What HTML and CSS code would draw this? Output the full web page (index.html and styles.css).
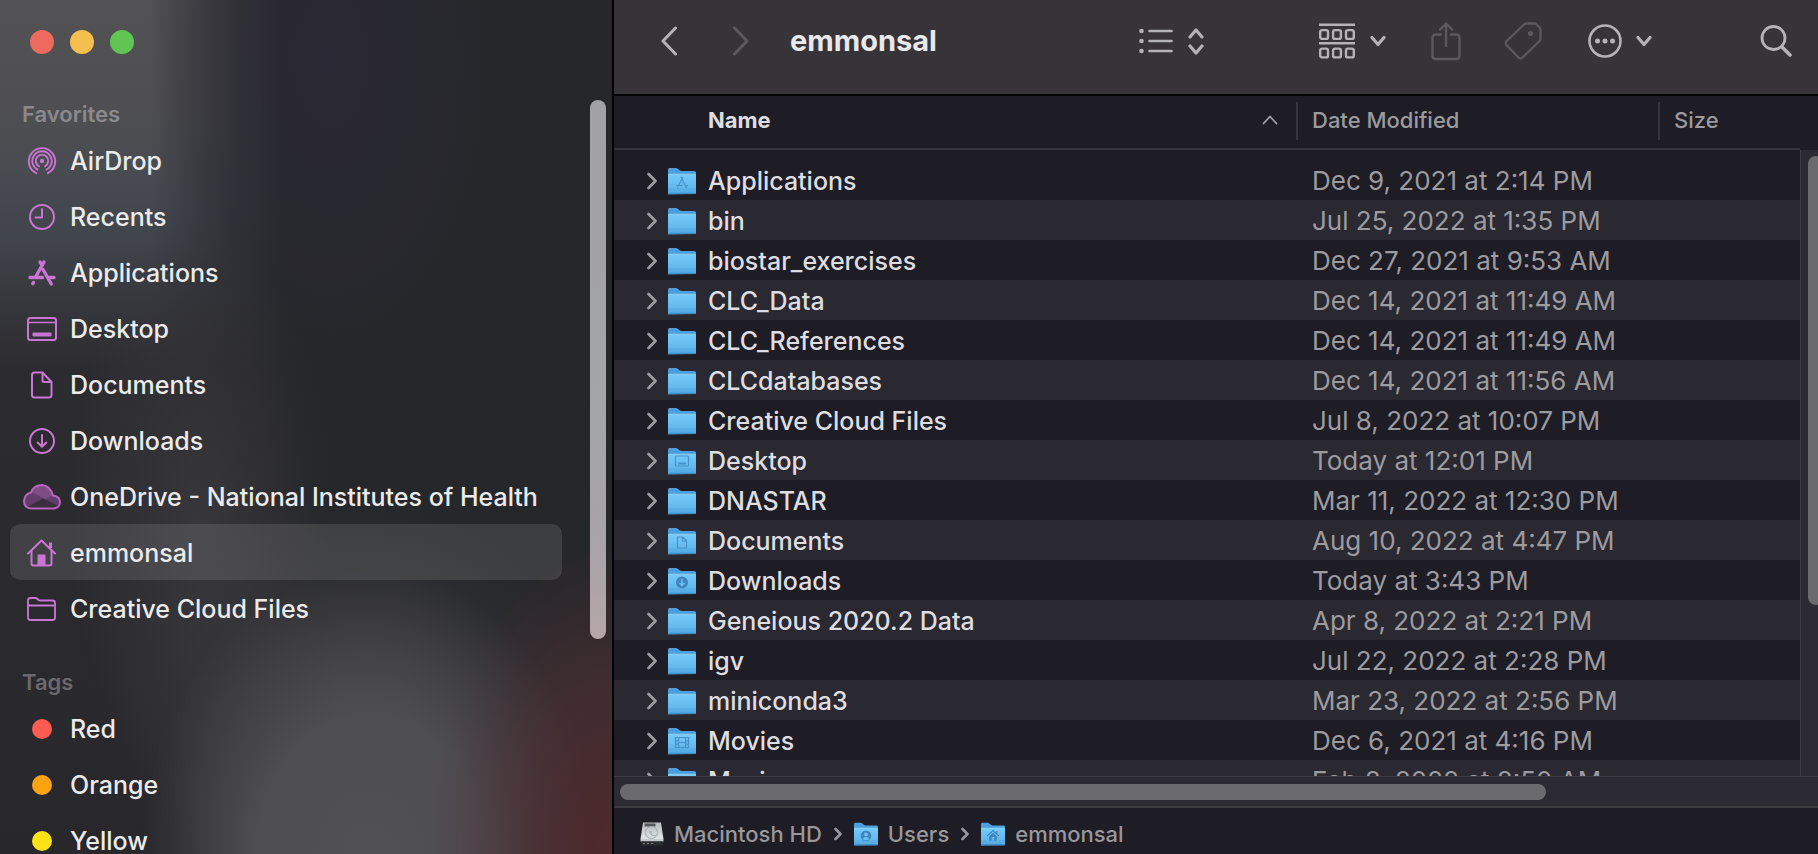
FILE: index.html
```html
<!DOCTYPE html>
<html lang="en">
<head>
<meta charset="utf-8">
<title>emmonsal</title>
<link rel="stylesheet" href="styles.css">
</head>
<body>
<svg class="defs" aria-hidden="true">
  <defs>
    <linearGradient id="folder-front" x1="0" y1="0" x2="0" y2="1">
      <stop offset="0" stop-color="#7fd0fb"/>
      <stop offset="0.2" stop-color="#70c6f7"/>
      <stop offset="1" stop-color="#5ab0e6"/>
    </linearGradient>
    <linearGradient id="drive-face" x1="0" y1="0" x2="0" y2="1">
      <stop offset="0" stop-color="#b9bcbf"/>
      <stop offset="1" stop-color="#dde3e6"/>
    </linearGradient>
    <symbol id="folder" viewBox="0 0 28 28">
      <path d="M0 27.500V2.500Q0 1 1.500 1H8Q9 1 10 2L11.500 3.200Q12.500 4 14 4H26.500Q28 4 28 5.500V27Z" fill="#4c9fdc"/>
      <path d="M0 6H28V7H0Z" fill="#3a82c4"/>
      <path d="M0 7.500Q0 6.500 1 6.500H27Q28 6.500 28 7.500V25.500Q28 27 26.500 27H1.500Q0 27 0 25.500Z" fill="url(#folder-front)"/>
      <path d="M0 22H28M0 24H28" stroke="#4da3dc" stroke-width="0.700"/>
      <path d="M0.300 26.300H27.700" stroke="#3b8cc6" stroke-width="1.200"/>
    </symbol>
    <symbol id="disclosure" viewBox="0 0 12 18">
      <path d="M2.500 2L9.500 9L2.500 16" fill="none" stroke="currentColor" stroke-width="2.800" stroke-linecap="round" stroke-linejoin="round"/>
    </symbol>
    <symbol id="caret" viewBox="0 0 16 12">
      <path d="M2 2.500L8 9.500L14 2.500" fill="none" stroke="currentColor" stroke-width="3.200" stroke-linecap="round" stroke-linejoin="round"/>
    </symbol>
  </defs>
</svg>

<div class="window">
  <aside class="sidebar">
    <div class="sidebar-content">
      <div class="window-controls">
        <button class="light light-close" aria-label="Close"></button>
        <button class="light light-minimize" aria-label="Minimize"></button>
        <button class="light light-zoom" aria-label="Zoom"></button>
      </div>
      <h2 class="section-title">Favorites</h2>
      <nav class="places" aria-label="Favorites">
        <a class="place" href="#"><svg class="place-icon" viewBox="0 0 40 40"><g fill="none" stroke="currentColor" stroke-width="1.900" stroke-linecap="round"><path d="M14.200 32.200A13.200 13.200 0 1 1 25.800 32.200"/><path d="M15.500 28.500A9.700 9.700 0 1 1 24.500 28.500"/><path d="M17 25.300A6.200 6.200 0 1 1 23 25.300"/></g><circle cx="20" cy="20" r="2.200" fill="currentColor"/></svg>AirDrop</a>
        <a class="place" href="#"><svg class="place-icon" viewBox="0 0 40 40"><g fill="none" stroke="currentColor" stroke-width="2" stroke-linecap="round" stroke-linejoin="round"><circle cx="20" cy="20" r="12"/><path d="M20 12V20.500H13.500"/></g></svg>Recents</a>
        <a class="place" href="#"><svg class="place-icon" viewBox="0 0 40 40"><g fill="none" stroke="currentColor" stroke-width="3.400" stroke-linecap="round"><path d="M18 9L19.500 11.500M22 9L14.200 23"/><path d="M21 16.500L29.300 31"/><path d="M8 24.500H20.500M27 24.500H32"/><path d="M11.500 29.500L10.800 30.700"/></g></svg>Applications</a>
        <a class="place" href="#"><svg class="place-icon" viewBox="0 0 40 40"><g fill="none" stroke="currentColor" stroke-width="2"><rect x="6" y="9" width="28" height="22" rx="2.500"/><path d="M6 13.500H34" stroke-width="1.500"/></g><rect x="10.500" y="23.500" width="19" height="4" rx="1" fill="currentColor"/></svg>Desktop</a>
        <a class="place" href="#"><svg class="place-icon" viewBox="0 0 40 40"><path d="M12.500 7.500H20.500L29.500 17V30Q29.500 32.500 27 32.500H12.500Q10 32.500 10 30V10Q10 7.500 12.500 7.500ZM20.500 8V15.500Q20.500 17 22 17H29" fill="none" stroke="currentColor" stroke-width="2" stroke-linejoin="round"/></svg>Documents</a>
        <a class="place" href="#"><svg class="place-icon" viewBox="0 0 40 40"><g fill="none" stroke="currentColor" stroke-width="2" stroke-linecap="round" stroke-linejoin="round"><circle cx="20" cy="20" r="12"/><path d="M20 14V25.500M15.700 21.500L20 25.700L24.300 21.500"/></g></svg>Downloads</a>
        <a class="place" href="#"><svg class="place-icon" viewBox="0 0 40 40"><path d="M9.500 31.500Q2 31 2 24Q2.500 17 9 15.500Q12 8 20 8Q28 8.500 31 18.500Q38 19.500 38 25.500Q37.500 31 32 31.500Z" fill="#643e6b"/><path d="M10 15.500Q13 8 20 8Q28 8.500 31 18.500L23 22Z" fill="#7f4c86"/><path d="M5 30L21 21.500L37 29Q35 31.500 32 31.500H9.500Q7 31.500 5 30Z" fill="#3b2e3f"/><path d="M9.500 31.500Q2 31 2 24Q2.500 17 9 15.500Q12 8 20 8Q28 8.500 31 18.500Q38 19.500 38 25.500Q37.500 31 32 31.500Z" fill="none" stroke="#b765bd" stroke-width="2"/></svg>OneDrive - National Institutes of Health</a>
        <a class="place place-active" href="#" aria-current="page"><svg class="place-icon" viewBox="0 0 40 40"><g fill="none" stroke="currentColor" stroke-width="2" stroke-linecap="round" stroke-linejoin="round"><path d="M6 20.500L19.500 7.500L33 20.500"/><path d="M9.500 18V30.500Q9.500 32.500 11.500 32.500H27.500Q29.500 32.500 29.500 30.500V18"/><path d="M28.500 15V9.500" stroke-width="3" stroke-linecap="butt"/></g><path d="M15.500 22.500Q15.500 21.500 16.500 21.500H22.500Q23.500 21.500 23.500 22.500V32.500H15.500Z" fill="currentColor"/></svg>emmonsal</a>
        <a class="place" href="#"><svg class="place-icon" viewBox="0 0 40 40"><path d="M6 28.500V11.500Q6 9 8.500 9H13Q14.500 9 15.500 10L16.500 11Q17 11.500 18.500 11.500H30.500Q33 11.500 33 14V28.500Q33 31 30.500 31H8.500Q6 31 6 28.500ZM6 16.500H33" fill="none" stroke="currentColor" stroke-width="1.800"/></svg>Creative Cloud Files</a>
      </nav>
      <h2 class="section-title section-tags">Tags</h2>
      <nav class="places" aria-label="Tags">
        <a class="place" href="#"><span class="tag-slot"><span class="tag tag-red"></span></span>Red</a>
        <a class="place" href="#"><span class="tag-slot"><span class="tag tag-orange"></span></span>Orange</a>
        <a class="place" href="#"><span class="tag-slot"><span class="tag tag-yellow"></span></span>Yellow</a>
      </nav>
    </div>
    <div class="sidebar-track"><div class="sidebar-thumb"></div></div>
  </aside>

  <main class="main">
    <header class="toolbar">
      <div class="nav-buttons">
        <button class="tool" aria-label="Back"><svg width="16" height="30" viewBox="0 0 16 30"><path d="M14.500 2L2 15L14.500 28" fill="none" stroke="currentColor" stroke-width="3" stroke-linecap="round" stroke-linejoin="round"/></svg></button>
        <button class="tool tool-disabled" aria-label="Forward" disabled><svg width="16" height="30" viewBox="0 0 16 30"><path d="M1.500 2L14 15L1.500 28" fill="none" stroke="currentColor" stroke-width="3" stroke-linecap="round" stroke-linejoin="round"/></svg></button>
      </div>
      <h1 class="title">emmonsal</h1>
      <div class="tools">
        <button class="tool view-tool" aria-label="View as list">
          <svg width="34" height="28" viewBox="0 0 34 28"><g stroke="currentColor" stroke-width="2.600" stroke-linecap="round"><path d="M10.500 4H32.500M10.500 14H32.500M10.500 24H32.500"/></g><g fill="currentColor"><circle cx="2.500" cy="4" r="2.300"/><circle cx="2.500" cy="14" r="2.300"/><circle cx="2.500" cy="24" r="2.300"/></g></svg>
          <svg width="16" height="28" viewBox="0 0 16 28"><path d="M2 10L8 3L14 10M2 19L8 26L14 19" fill="none" stroke="currentColor" stroke-width="3.200" stroke-linecap="round" stroke-linejoin="round"/></svg>
        </button>
        <button class="tool group-tool" aria-label="Group items">
          <svg width="36" height="36" viewBox="0 0 36 36"><g fill="none" stroke="currentColor" stroke-width="2.400"><path d="M0 1.700H36M0 20.300H36"/><rect x="1.200" y="7.100" width="7.800" height="8.800" rx="2"/><rect x="14.100" y="7.100" width="7.800" height="8.800" rx="2"/><rect x="27" y="7.100" width="7.800" height="8.800" rx="2"/><rect x="1.200" y="25.600" width="7.800" height="8.800" rx="2"/><rect x="14.100" y="25.600" width="7.800" height="8.800" rx="2"/><rect x="27" y="25.600" width="7.800" height="8.800" rx="2"/></g></svg>
          <svg width="16" height="12"><use href="#caret"/></svg>
        </button>
        <button class="tool tool-disabled share-tool" aria-label="Share" disabled><svg width="30" height="40" viewBox="0 0 30 40"><g fill="none" stroke="currentColor" stroke-width="2.400" stroke-linecap="round" stroke-linejoin="round"><path d="M10 13.500H5Q1.500 13.500 1.500 17V34.500Q1.500 38 5 38H25Q28.500 38 28.500 34.500V17Q28.500 13.500 25 13.500H20"/><path d="M15 25V3M9 8.500L15 2.500L21 8.500"/></g></svg></button>
        <button class="tool tool-disabled tag-tool" aria-label="Edit tags" disabled><svg width="38" height="38" viewBox="0 0 38 38"><path d="M20 2.500Q21 1.500 22.500 1.500H30Q31.500 1.500 32.500 2.500L35.500 5.500Q36.500 6.500 36.500 8V16.500Q36.500 18 35.500 19L18.500 35.500Q16.500 37.500 14.500 35.500L2.500 23Q0.800 21 2.500 19.200Z" fill="none" stroke="currentColor" stroke-width="2.300"/><circle cx="26.500" cy="11.500" r="2.600" fill="currentColor"/></svg></button>
        <button class="tool more-tool" aria-label="More actions">
          <svg width="34" height="34" viewBox="0 0 34 34"><circle cx="17" cy="17" r="15.500" fill="none" stroke="currentColor" stroke-width="2.600"/><g fill="currentColor"><circle cx="9.500" cy="17" r="2.500"/><circle cx="17" cy="17" r="2.500"/><circle cx="24.500" cy="17" r="2.500"/></g></svg>
          <svg width="16" height="12"><use href="#caret"/></svg>
        </button>
        <button class="tool search-tool" aria-label="Search"><svg width="32" height="32" viewBox="0 0 32 32"><circle cx="13.500" cy="13" r="11.500" fill="none" stroke="currentColor" stroke-width="2.800"/><path d="M22 22L30 30" stroke="currentColor" stroke-width="3.600" stroke-linecap="round"/></svg></button>
      </div>
    </header>

    <section class="list-pane">
      <div class="list-clip">
        <table class="files">
          <colgroup><col><col class="col-date"><col class="col-size"></colgroup>
          <thead>
            <tr>
              <th class="head-name" aria-sort="ascending"><button class="head-button">Name<svg width="16" height="10" viewBox="0 0 16 10"><path d="M1.500 8.500L8 1.500L14.500 8.500" fill="none" stroke="currentColor" stroke-width="1.800" stroke-linecap="round" stroke-linejoin="round"/></svg></button></th>
              <th><button class="head-button head-divided">Date Modified</button></th>
              <th><button class="head-button head-divided">Size</button></th>
            </tr>
          </thead>
          <tbody id="rows"></tbody>
        </table>
      </div>
      <div class="v-track"><div class="v-thumb"></div></div>
      <div class="h-track"><div class="h-thumb"></div></div>
    </section>

    <footer class="path-bar">
      <a class="crumb" href="#"><svg class="crumb-icon" viewBox="0 0 24 24"><path d="M3 0.500H21L23.500 17H0.500Z" fill="url(#drive-face)"/><rect x="4.500" y="1.500" width="11" height="3" fill="#55595c"/><circle cx="11.500" cy="10.500" r="6" fill="none" stroke="#a3a9ad" stroke-width="1"/><path d="M16 14Q12 14 10.500 11.500" fill="none" stroke="#a3a9ad" stroke-width="1.200"/><circle cx="10.500" cy="10" r="1.600" fill="#b1b6ba"/><path d="M0.500 17H23.500V19.500H0.500Z" fill="#c4cacd"/><path d="M1 19.500H23V23.500H1Z" fill="#2c2e31"/><path d="M3 21.500H15" stroke="#777b7e" stroke-dasharray="2 2"/></svg>Macintosh HD</a>
      <svg class="crumb-arrow" viewBox="0 0 8 14"><path d="M1.500 2L6.500 7L1.500 12" fill="none" stroke="currentColor" stroke-width="2.600" stroke-linecap="round" stroke-linejoin="round"/></svg>
      <a class="crumb" href="#"><svg class="crumb-icon" viewBox="0 0 28 28"><use href="#folder"/><circle cx="14" cy="16" r="6.200" fill="#3f86bf"/><circle cx="14" cy="14.500" r="2.200" fill="#6cc2f4"/><path d="M10 19.500Q14 15.500 18 19.500Q14 23 10 19.500Z" fill="#6cc2f4"/></svg>Users</a>
      <svg class="crumb-arrow" viewBox="0 0 8 14"><path d="M1.500 2L6.500 7L1.500 12" fill="none" stroke="currentColor" stroke-width="2.600" stroke-linecap="round" stroke-linejoin="round"/></svg>
      <a class="crumb" href="#"><svg class="crumb-icon" viewBox="0 0 28 28"><use href="#folder"/><path d="M7 16.500L14 10L21 16.500M18.500 13V10.500" fill="none" stroke="#3f86bf" stroke-width="1.500"/><path d="M9.500 16.500L14 12.500L18.500 16.500V22H15.500V17.500H12.500V22H9.500Z" fill="#3f86bf"/></svg>emmonsal</a>
    </footer>
  </main>
</div>
<script src="files.js"></script>
</body>
</html>
```
FILE: styles.css
```css
* {
  box-sizing: border-box;
}

body {
  margin: 0;
  font-family: Inter, "Liberation Sans", sans-serif;
  font-size: 25px;
  font-weight: 500;
  background: #1e1c25;
  color: #dedde0;
}

button {
  padding: 0;
  border: 0;
  background: none;
  color: inherit;
  font: inherit;
}

a {
  color: inherit;
  text-decoration: none;
}

.defs {
  display: block;
  width: 0;
  height: 0;
}

.window {
  display: flex;
  height: 100vh;
  overflow: hidden;
}

/* Sidebar */

.sidebar {
  display: flex;
  flex: 0 0 614px;
  overflow: hidden;
  border-right: 2px solid #000;
  background:
    radial-gradient(ellipse 180px 310px at 100% 100%, #502a2c 0, #50303499 55%, #50303300 100%),
    radial-gradient(ellipse 230px 290px at 370px 860px, #515055 0, #4e4d52 50%, #4e4d5200 100%),
    radial-gradient(ellipse 240px 200px at 350px 700px, #45444999 0, #45444900 100%),
    radial-gradient(ellipse 130px 300px at 200px 520px, #37363b 0, #37363b00 100%),
    radial-gradient(ellipse 180px 320px at 330px 60px, #2b2936dd 0, #2b293600 100%),
    linear-gradient(90deg, #26272a00 0, #26272a00 150px, #26272a 290px),
    linear-gradient(180deg, #525154 0, #4f4f52 110px, #464a50 190px, #40444b 240px, #35363b 310px, #2c2b30 370px, #28272b 100%);
}

.sidebar-content {
  flex: 1;
  padding: 0 28px 0 10px;
}

.window-controls {
  display: flex;
  gap: 16px;
  padding: 30px 20px 0;
}

.light {
  width: 24px;
  height: 24px;
  border-radius: 50%;
}

.light-close { background: #ec6a5e; }
.light-minimize { background: #f4bf4f; }
.light-zoom { background: #61c554; }

.section-title {
  margin: 46px 0 4px 12px;
  color: #8a898d;
  font-size: 22px;
  font-weight: 600;
  line-height: 28px;
}

.section-tags {
  margin-top: 32px;
  color: #6a696d;
}

.places {
  display: flex;
  flex-direction: column;
}

.place {
  display: flex;
  align-items: center;
  gap: 8px;
  height: 56px;
  padding: 1px 0 0 12px;
  border-radius: 10px;
  color: #ebebec;
  white-space: nowrap;
}

.place-active {
  background: #ffffff1c;
}

.place-icon {
  flex: none;
  width: 40px;
  height: 40px;
  color: #ca75d3;
}

.tag-slot {
  display: flex;
  justify-content: center;
  width: 40px;
}

.tag {
  width: 20px;
  height: 20px;
  border-radius: 50%;
}

.tag-red { background: #ff5b51; }
.tag-orange { background: #fca311; }
.tag-yellow { background: #ffe317; }

.sidebar-track {
  flex: 0 0 22px;
  padding-top: 100px;
}

.sidebar-thumb {
  width: 16px;
  height: 539px;
  border-radius: 8px;
  background: linear-gradient(180deg, #a2a1a6, #a4a5a8 60%, #a7a3a7 80%, #b5a6a8);
}

/* Toolbar */

.main {
  display: flex;
  flex: 1;
  flex-direction: column;
  min-width: 0;
}

.toolbar {
  display: flex;
  align-items: center;
  flex: none;
  height: 96px;
  padding: 0 26px 12px 47px;
  border-bottom: 2px solid #050507;
  background: #363439;
}

.nav-buttons {
  display: flex;
  gap: 56px;
}

.title {
  margin: 0 0 0 41px;
  color: #e9e8ea;
  font-size: 29px;
  font-weight: 700;
  line-height: 36px;
}

.tools {
  display: flex;
  align-items: center;
  margin-left: auto;
}

.tool {
  display: flex;
  align-items: center;
  gap: 16px;
  color: #b4b3b8;
}

.tool-disabled { color: #5a595e; }
.view-tool { gap: 15px; }
.group-tool { gap: 15px; margin-left: 115px; }
.share-tool { margin-left: 45px; }
.tag-tool { margin-left: 43px; }
.more-tool { gap: 14px; margin-left: 46px; }
.search-tool { margin-left: 108px; }

/* File list */

.list-pane {
  display: grid;
  flex: 1;
  grid-template-columns: 1fr 18px;
  grid-template-rows: 54px 1fr 30px;
  min-height: 0;
}

.list-clip {
  grid-row: 1 / 3;
  overflow: hidden;
}

.files {
  width: 100%;
  border-spacing: 0;
  table-layout: fixed;
}

.col-date { width: 362px; }
.col-size { width: 142px; }

.files th {
  height: 54px;
  padding: 0 0 2px;
  border-bottom: 2px solid #36353c;
  color: #9b9a9f;
  font-size: 22px;
  font-weight: 500;
  text-align: left;
}

.files .head-name {
  color: #dedde0;
  font-weight: 700;
}

.head-button {
  display: flex;
  align-items: center;
  justify-content: space-between;
  width: 100%;
  height: 38px;
  padding: 0 18px 2px 94px;
}

.head-name svg { color: #a3a2a7; }

.files .head-divided {
  padding: 0 0 2px 14px;
  border-left: 2px solid #37363d;
}

.files tbody::before {
  display: block;
  height: 10px;
  content: "";
}

.files td {
  height: 40px;
  padding: 2px 0 0 16px;
  color: #9c9ba0;
  font-size: 26px;
  font-weight: 400;
  line-height: 30px;
  white-space: nowrap;
}

.files tr:nth-child(even) td {
  background: #2a2830;
}

.files .cell-name {
  padding-left: 32px;
  color: #dedde0;
  font-size: 25px;
  font-weight: 500;
}

.entry {
  display: flex;
  align-items: center;
}

.disclosure {
  display: flex;
  margin-right: 10px;
  color: #9b9a9f;
}

.folder-icon {
  flex: none;
  width: 28px;
  height: 28px;
  margin-right: 12px;
}

.v-track {
  grid-column: 2;
  grid-row: 2;
  padding: 6px 0 0 7px;
  overflow: hidden;
  border-left: 1px solid #3e3d43;
  background: #2c2a32;
}

.v-thumb {
  width: 16px;
  height: 449px;
  border-radius: 8px;
  background: #6b6a6f;
}

.h-track {
  grid-column: 1 / 3;
  grid-row: 3;
  padding: 7px 272px 0 6px;
  border-top: 1px solid #3e3d43;
  background: #2c2a32;
}

.h-thumb {
  height: 16px;
  border-radius: 8px;
  background: #6b6a6f;
}

/* Path bar */

.path-bar {
  display: flex;
  align-items: center;
  flex: none;
  gap: 12px;
  height: 48px;
  padding: 6px 26px 0;
  border-top: 2px solid #3c3b42;
  color: #98979c;
  font-size: 22px;
}

.crumb {
  display: flex;
  align-items: center;
  gap: 10px;
}

.crumb-icon {
  width: 24px;
  height: 24px;
}

.crumb-arrow {
  width: 8px;
  height: 14px;
}
```
FILE: files.js
```js
const files = [
  ["Applications", "Dec 9, 2021 at 2:14 PM", "apps"],
  ["bin", "Jul 25, 2022 at 1:35 PM"],
  ["biostar_exercises", "Dec 27, 2021 at 9:53 AM"],
  ["CLC_Data", "Dec 14, 2021 at 11:49 AM"],
  ["CLC_References", "Dec 14, 2021 at 11:49 AM"],
  ["CLCdatabases", "Dec 14, 2021 at 11:56 AM"],
  ["Creative Cloud Files", "Jul 8, 2022 at 10:07 PM"],
  ["Desktop", "Today at 12:01 PM", "desktop"],
  ["DNASTAR", "Mar 11, 2022 at 12:30 PM"],
  ["Documents", "Aug 10, 2022 at 4:47 PM", "documents"],
  ["Downloads", "Today at 3:43 PM", "downloads"],
  ["Geneious 2020.2 Data", "Apr 8, 2022 at 2:21 PM"],
  ["igv", "Jul 22, 2022 at 2:28 PM"],
  ["miniconda3", "Mar 23, 2022 at 2:56 PM"],
  ["Movies", "Dec 6, 2021 at 4:16 PM", "movies"],
  ["Music", "Feb 8, 2022 at 8:50 AM", "music"]
];

const line = 'fill="none" stroke="#4792cb" stroke-width="1.2"';
const emblems = {
  apps: `<path d="M15 10L10 19.500M13 10L18.500 21M8 18.500H14.500M17.500 18.500H20M9.800 20.500L9.300 21.500" ${line}/>`,
  desktop: `<rect x="7.500" y="9" width="13" height="10" rx="1" ${line}/><path d="M10 16.500H18" stroke="#4792cb" stroke-width="2"/>`,
  documents: `<path d="M9.500 10H15L18.500 13.500V21H9.500ZM14.500 10V14H18.500" ${line}/>`,
  downloads: `<circle cx="14" cy="15.500" r="6" fill="#3f86bf"/><path d="M14 12V18.500M11.500 16L14 18.500L16.500 16" fill="none" stroke="#6cc2f4" stroke-width="1.5"/>`,
  movies: `<path d="M7.500 10.500H20.500V20.500H7.500ZM10.500 10.500V20.500M17.500 10.500V20.500M10.500 15.500H17.500M7.500 13.800H10.500M7.500 17.200H10.500M17.500 13.800H20.500M17.500 17.200H20.500" ${line}/>`,
  music: `<path d="M12 20V11L18 9.500V18.500" ${line}/>`
};

document.getElementById("rows").innerHTML = files.map(([name, date, emblem]) => `
  <tr>
    <td class="cell-name"><div class="entry">
      <button class="disclosure" aria-label="Expand ${name}"><svg width="12" height="18"><use href="#disclosure"/></svg></button>
      <svg class="folder-icon" viewBox="0 0 28 28"><use href="#folder"/>${emblems[emblem] || ""}</svg>
      <span>${name}</span>
    </div></td>
    <td>${date}</td>
    <td></td>
  </tr>`).join("");
```
